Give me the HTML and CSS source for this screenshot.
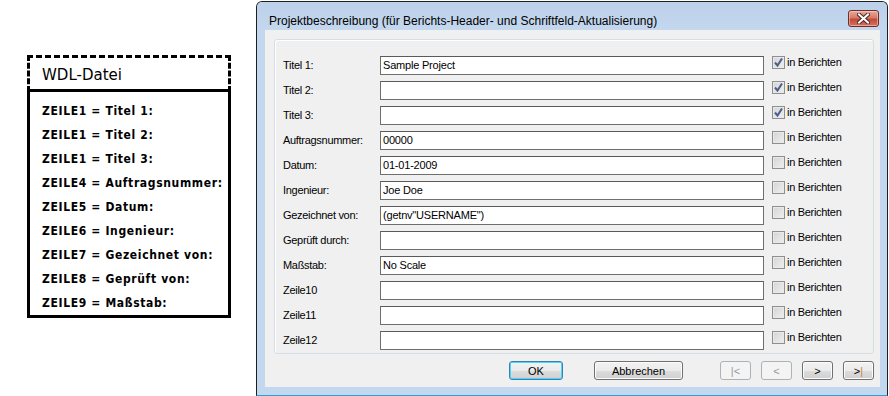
FILE: index.html
```html
<!DOCTYPE html>
<html lang="de">
<head>
  <meta charset="UTF-8" />
  <title>Projektbeschreibung</title>
  <link rel="stylesheet" href="styles.css">
</head>
<body>
  <div class="page">

    <div class="wdl">
      <div class="wdl-head">WDL-Datei</div>
      <div class="wdl-body">
        <div class="wdl-line">ZEILE1 = Titel 1:</div>
        <div class="wdl-line">ZEILE1 = Titel 2:</div>
        <div class="wdl-line">ZEILE1 = Titel 3:</div>
        <div class="wdl-line">ZEILE4 = Auftragsnummer:</div>
        <div class="wdl-line">ZEILE5 = Datum:</div>
        <div class="wdl-line">ZEILE6 = Ingenieur:</div>
        <div class="wdl-line">ZEILE7 = Gezeichnet von:</div>
        <div class="wdl-line">ZEILE8 = Geprüft von:</div>
        <div class="wdl-line">ZEILE9 = Maßstab:</div>
      </div>
    </div>

    <div class="window">
      <div class="titlebar">
        <span class="title">Projektbeschreibung (für Berichts-Header- und Schriftfeld-Aktualisierung)</span>
        <button class="close-btn" title="Schließen">
          <svg width="13" height="11" viewBox="0 0 13 11">
            <path d="M2 1.5 L11 9.5 M11 1.5 L2 9.5" stroke="#4a2a26" stroke-width="4" stroke-linecap="square" fill="none"/>
            <path d="M2 1.5 L11 9.5 M11 1.5 L2 9.5" stroke="#ffffff" stroke-width="2" stroke-linecap="square" fill="none"/>
          </svg>
        </button>
      </div>

      <div class="client">
        <div class="group">
          <div class="row">
            <span class="lbl">Titel 1:</span>
            <div class="field">Sample Project</div>
            <span class="chk checked"><svg width="11" height="11" viewBox="0 0 11 11"><path d="M2 5.5 L4.5 8.5 L9 1.5" stroke="#4b5f8c" stroke-width="2" fill="none"/></svg></span>
            <span class="chk-text">in Berichten</span>
          </div>
          <div class="row">
            <span class="lbl">Titel 2:</span>
            <div class="field"></div>
            <span class="chk checked"><svg width="11" height="11" viewBox="0 0 11 11"><path d="M2 5.5 L4.5 8.5 L9 1.5" stroke="#4b5f8c" stroke-width="2" fill="none"/></svg></span>
            <span class="chk-text">in Berichten</span>
          </div>
          <div class="row">
            <span class="lbl">Titel 3:</span>
            <div class="field"></div>
            <span class="chk checked"><svg width="11" height="11" viewBox="0 0 11 11"><path d="M2 5.5 L4.5 8.5 L9 1.5" stroke="#4b5f8c" stroke-width="2" fill="none"/></svg></span>
            <span class="chk-text">in Berichten</span>
          </div>
          <div class="row">
            <span class="lbl">Auftragsnummer:</span>
            <div class="field">00000</div>
            <span class="chk"></span>
            <span class="chk-text">in Berichten</span>
          </div>
          <div class="row">
            <span class="lbl">Datum:</span>
            <div class="field">01-01-2009</div>
            <span class="chk"></span>
            <span class="chk-text">in Berichten</span>
          </div>
          <div class="row">
            <span class="lbl">Ingenieur:</span>
            <div class="field">Joe Doe</div>
            <span class="chk"></span>
            <span class="chk-text">in Berichten</span>
          </div>
          <div class="row">
            <span class="lbl">Gezeichnet von:</span>
            <div class="field">(getnv"USERNAME")</div>
            <span class="chk"></span>
            <span class="chk-text">in Berichten</span>
          </div>
          <div class="row">
            <span class="lbl">Geprüft durch:</span>
            <div class="field"></div>
            <span class="chk"></span>
            <span class="chk-text">in Berichten</span>
          </div>
          <div class="row">
            <span class="lbl">Maßstab:</span>
            <div class="field">No Scale</div>
            <span class="chk"></span>
            <span class="chk-text">in Berichten</span>
          </div>
          <div class="row">
            <span class="lbl">Zeile10</span>
            <div class="field"></div>
            <span class="chk"></span>
            <span class="chk-text">in Berichten</span>
          </div>
          <div class="row">
            <span class="lbl">Zeile11</span>
            <div class="field"></div>
            <span class="chk"></span>
            <span class="chk-text">in Berichten</span>
          </div>
          <div class="row">
            <span class="lbl">Zeile12</span>
            <div class="field"></div>
            <span class="chk"></span>
            <span class="chk-text">in Berichten</span>
          </div>
        </div>

        <div class="buttons">
          <button class="btn btn-ok">OK</button>
          <button class="btn btn-cancel">Abbrechen</button>
          <div class="nav">
            <button class="btn btn-nav" disabled>|&lt;</button>
            <button class="btn btn-nav" disabled>&lt;</button>
            <button class="btn btn-nav">&gt;</button>
            <button class="btn btn-nav">&gt;<span class="bar">|</span></button>
          </div>
        </div>
      </div>
    </div>

  </div>
</body>
</html>
```

FILE: styles.css
```css
* {
  box-sizing: border-box;
}

body {
  margin: 0;
  padding: 0;
  background: #ffffff;
  font-family: 'Liberation Sans', Arial, sans-serif;
}

.page {
  display: flex;
  align-items: flex-start;
}

/* left: WDL file sketch */

.wdl {
  width: 204px;
  margin-top: 55px;
  margin-left: 27px;
}

.wdl-head {
  height: 37px;
  border: 3px dashed #000;
  border-bottom: 3px solid #000;
  padding: 4px 0 0 12px;
  font-family: 'DejaVu Sans', sans-serif;
  font-size: 15px;
  line-height: 26px;
  color: #000;
}

.wdl-body {
  border: 3px solid #000;
  border-top: none;
  padding: 7px 0 0 12px;
  height: 226px;
}

.wdl-line {
  height: 24px;
  line-height: 24px;
  font-family: 'DejaVu Sans Condensed', 'DejaVu Sans', sans-serif;
  font-stretch: condensed;
  font-weight: bold;
  font-size: 12px;
  letter-spacing: 0.65px;
  color: #000;
  white-space: nowrap;
}

/* right: dialog window */

.window {
  width: 632px;
  height: 395px;
  margin-top: 1px;
  margin-left: 25px;
  border: 1px solid #1f1f1f;
  border-bottom-color: #2ba3d6;
  border-radius: 6px 6px 0 0;
  background: #c3d7ee;
  padding: 0 7px 8px 8px;
}

.titlebar {
  height: 28px;
  display: flex;
  align-items: flex-start;
  justify-content: space-between;
  background: linear-gradient(#bcd1ea, #c3d7ee);
  margin: 0 -7px 0 -8px;
  padding: 0 8px 0 12px;
  border-radius: 5px 5px 0 0;
}

.title {
  font-family: 'Liberation Sans', Arial, sans-serif;
  font-size: 12px;
  line-height: 14px;
  margin-top: 12px;
  color: #000;
  white-space: nowrap;
}

.close-btn {
  width: 31px;
  height: 17px;
  margin-top: 8px;
  padding: 0;
  border: 1px solid #6e2d25;
  border-radius: 3px;
  background: linear-gradient(#e9a99b 0%, #d77a69 45%, #c24a38 55%, #d8705c 100%);
  display: flex;
  align-items: center;
  justify-content: center;
  box-shadow: inset 0 0 0 1px rgba(255, 220, 210, 0.5);
}

.client {
  height: 357px;
  background: #f0f0f0;
  padding: 9px 6px 0 9px;
}

.group {
  height: 315px;
  border: 1px solid #d5dfe5;
  border-radius: 3px;
  box-shadow: inset 1px 1px 0 #fff;
  padding: 16px 0 0 8px;
  display: flex;
  flex-direction: column;
  gap: 6px;
}

.row {
  display: flex;
  align-items: flex-start;
  height: 19px;
}

.lbl {
  width: 97px;
  font-size: 11px;
  letter-spacing: -0.3px;
  line-height: 19px;
  color: #000;
  white-space: nowrap;
}

.field {
  width: 384px;
  height: 19px;
  background: #fff;
  border: 1px solid #6f6f6f;
  border-top-color: #5a5a5a;
  padding-left: 2px;
  font-size: 11px;
  letter-spacing: -0.2px;
  line-height: 17px;
  color: #000;
  white-space: nowrap;
}

.chk {
  width: 13px;
  height: 13px;
  margin-left: 8px;
  border: 1px solid #8f8f8f;
  background: linear-gradient(135deg, #d4d4d4, #efefef);
  box-shadow: inset 0 0 0 1px #e9e9e9;
  display: flex;
  align-items: center;
  justify-content: center;
}

.chk-text {
  margin-left: 2px;
  font-size: 11px;
  letter-spacing: -0.3px;
  line-height: 13px;
  color: #000;
  white-space: nowrap;
}

.buttons {
  display: flex;
  align-items: flex-start;
  margin-top: 7px;
}

.btn {
  height: 19px;
  padding: 0;
  border: 1px solid #707070;
  border-radius: 3px;
  background: linear-gradient(#f2f2f2 0%, #ebebeb 50%, #dddddd 51%, #cfcfcf 100%);
  box-shadow: inset 0 0 0 1px #fcfcfc;
  font-family: 'Liberation Sans', Arial, sans-serif;
  font-size: 11px;
  line-height: 16px;
  color: #000;
}

.btn-ok {
  width: 54px;
  margin-left: 235px;
  border-color: #3c7fb1;
  box-shadow: inset 0 0 0 1px #48d7fb;
}

.btn-cancel {
  width: 89px;
  margin-left: 31px;
}

.nav {
  display: flex;
  gap: 10px;
  margin-left: auto;
}

.btn-nav {
  width: 31px;
}

.btn-nav:disabled {
  border-color: #adb2b5;
  background: #f4f4f4;
  box-shadow: none;
  color: #9a9a9a;
}

.bar {
  color: #d9822b;
}
```
